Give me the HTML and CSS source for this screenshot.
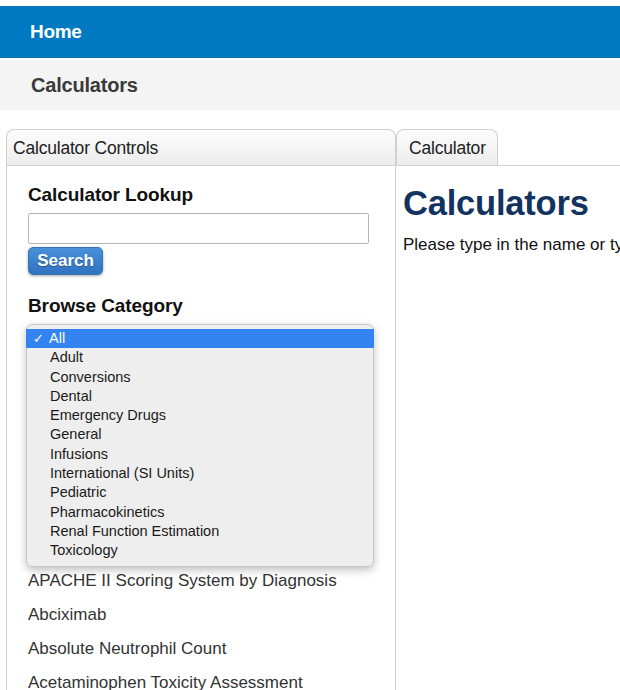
FILE: index.html
```html
<!DOCTYPE html>
<html lang="en">
<head>
    <meta charset="UTF-8">
    <meta name="viewport" content="width=device-width, initial-scale=1.0">
    <title>Calculators</title>
    <link rel="stylesheet" href="styles.css">
</head>
<body>
    <div class="topbar"><a href="#">Home</a></div>
    <div class="subbar">Calculators</div>

    <div class="main">
        <div class="panel controls">
            <div class="tabs">
                <div class="tab wide">Calculator Controls</div>
            </div>
            <div class="panel-body">
                <h3>Calculator Lookup</h3>
                <input type="text" class="lookup">
                <button class="search">Search</button>

                <h3 class="browse">Browse Category</h3>
                <div class="category">
                    <ul class="dropdown">
                        <li class="selected"><span class="check">✓</span>All</li>
                        <li>Adult</li>
                        <li>Conversions</li>
                        <li>Dental</li>
                        <li>Emergency Drugs</li>
                        <li>General</li>
                        <li>Infusions</li>
                        <li>International (SI Units)</li>
                        <li>Pediatric</li>
                        <li>Pharmacokinetics</li>
                        <li>Renal Function Estimation</li>
                        <li>Toxicology</li>
                    </ul>
                </div>

                <ul class="calc-list">
                    <li>APACHE II Scoring System by Diagnosis</li>
                    <li>Abciximab</li>
                    <li>Absolute Neutrophil Count</li>
                    <li>Acetaminophen Toxicity Assessment</li>
                </ul>
            </div>
        </div>

        <div class="panel calculator">
            <div class="tabs">
                <div class="tab">Calculator</div>
            </div>
            <div class="panel-body">
                <h1>Calculators</h1>
                <p>Please type in the name or type of calculator you are looking for.</p>
            </div>
        </div>
    </div>
</body>
</html>
```

FILE: styles.css
```css
* {
    box-sizing: border-box;
    margin: 0;
    padding: 0;
}

body {
    font-family: "Liberation Sans", Arial, sans-serif;
    background-color: white;
    color: #222;
    height: 690px;
    overflow: hidden;
}

.topbar {
    margin-top: 6px;
    height: 52px;
    background-color: #0079c2;
    border-bottom: 1px solid #0a6aa8;
    padding-left: 30px;
    display: flex;
    align-items: center;
}

.topbar a {
    color: white;
    font-size: 19px;
    font-weight: bold;
    text-decoration: none;
    letter-spacing: -0.3px;
}

.subbar {
    margin-top: 2px;
    height: 50px;
    background-color: #f4f4f4;
    padding-left: 31px;
    display: flex;
    align-items: center;
    font-size: 20px;
    font-weight: bold;
    color: #3a3a3a;
    letter-spacing: -0.2px;
}

.main {
    display: flex;
    padding-top: 19px;
    padding-left: 6px;
}

.panel {
    display: flex;
    flex-direction: column;
    height: 570px;
}

.controls {
    width: 390px;
}

.calculator {
    flex: 1;
    overflow: hidden;
}

.tabs {
    display: flex;
    height: 36px;
    flex-shrink: 0;
}

.tab {
    border: 1px solid #d0d0d0;
    border-bottom: none;
    border-radius: 8px 8px 0 0;
    background: linear-gradient(#fdfdfd, #ececec);
    font-size: 17.5px;
    color: #222;
    padding: 8px 11px 0 12px;
    letter-spacing: -0.2px;
}

.controls .tab {
    padding-left: 6px;
}

.tab.wide {
    flex: 1;
}

.controls .panel-body {
    border: 1px solid #d0d0d0;
    border-bottom: none;
    flex: 1;
    padding: 18px 21px 0 21px;
}

.calculator .panel-body {
    border-top: 1px solid #d0d0d0;
    flex: 1;
    padding: 18px 0 0 7px;
    white-space: nowrap;
}

h3 {
    font-size: 19px;
    line-height: 22px;
    font-weight: bold;
    color: #111;
    letter-spacing: -0.1px;
}

.lookup {
    display: block;
    margin-top: 7px;
    width: 341px;
    height: 31px;
    border: 1px solid #b5b5b5;
    border-radius: 2px;
    background: white;
}

.search {
    display: block;
    margin-top: 3px;
    width: 75px;
    height: 28px;
    border: 1px solid #3a73b8;
    border-radius: 5px;
    background: linear-gradient(#4a90d9, #2f72c0);
    color: white;
    font-family: "Liberation Sans", Arial, sans-serif;
    font-size: 17px;
    font-weight: bold;
    box-shadow: 0 1px 3px rgba(0, 0, 0, 0.35);
    text-shadow: 0 1px 1px rgba(0, 0, 0, 0.3);
}

.browse {
    margin-top: 20px;
}

.category {
    position: relative;
    margin-top: 7px;
    height: 240px;
}

.dropdown {
    position: absolute;
    top: 0;
    left: -2px;
    width: 348px;
    list-style: none;
    background-color: #eeeeee;
    border: 1px solid #c8c8c8;
    border-radius: 6px;
    box-shadow: 0 3px 8px rgba(0, 0, 0, 0.25);
    padding: 4px 0 5px 0;
    z-index: 10;
}

.dropdown li {
    height: 19.3px;
    line-height: 19.3px;
    font-size: 14.5px;
    color: #1a1a1a;
    padding-left: 23px;
}

.dropdown li.selected {
    background-color: #3383f0;
    color: white;
    padding-left: 7px;
    margin: 0 -1px;
}

.check {
    display: inline-block;
    width: 16px;
    font-size: 13px;
}

.calc-list {
    list-style: none;
}

.calc-list li {
    height: 34px;
    line-height: 34px;
    font-size: 17px;
    color: #333;
}

h1 {
    font-size: 34.5px;
    font-weight: bold;
    color: #12325f;
    letter-spacing: -0.2px;
}

p {
    margin-top: 12px;
    font-size: 17px;
    color: #111;
}
```
